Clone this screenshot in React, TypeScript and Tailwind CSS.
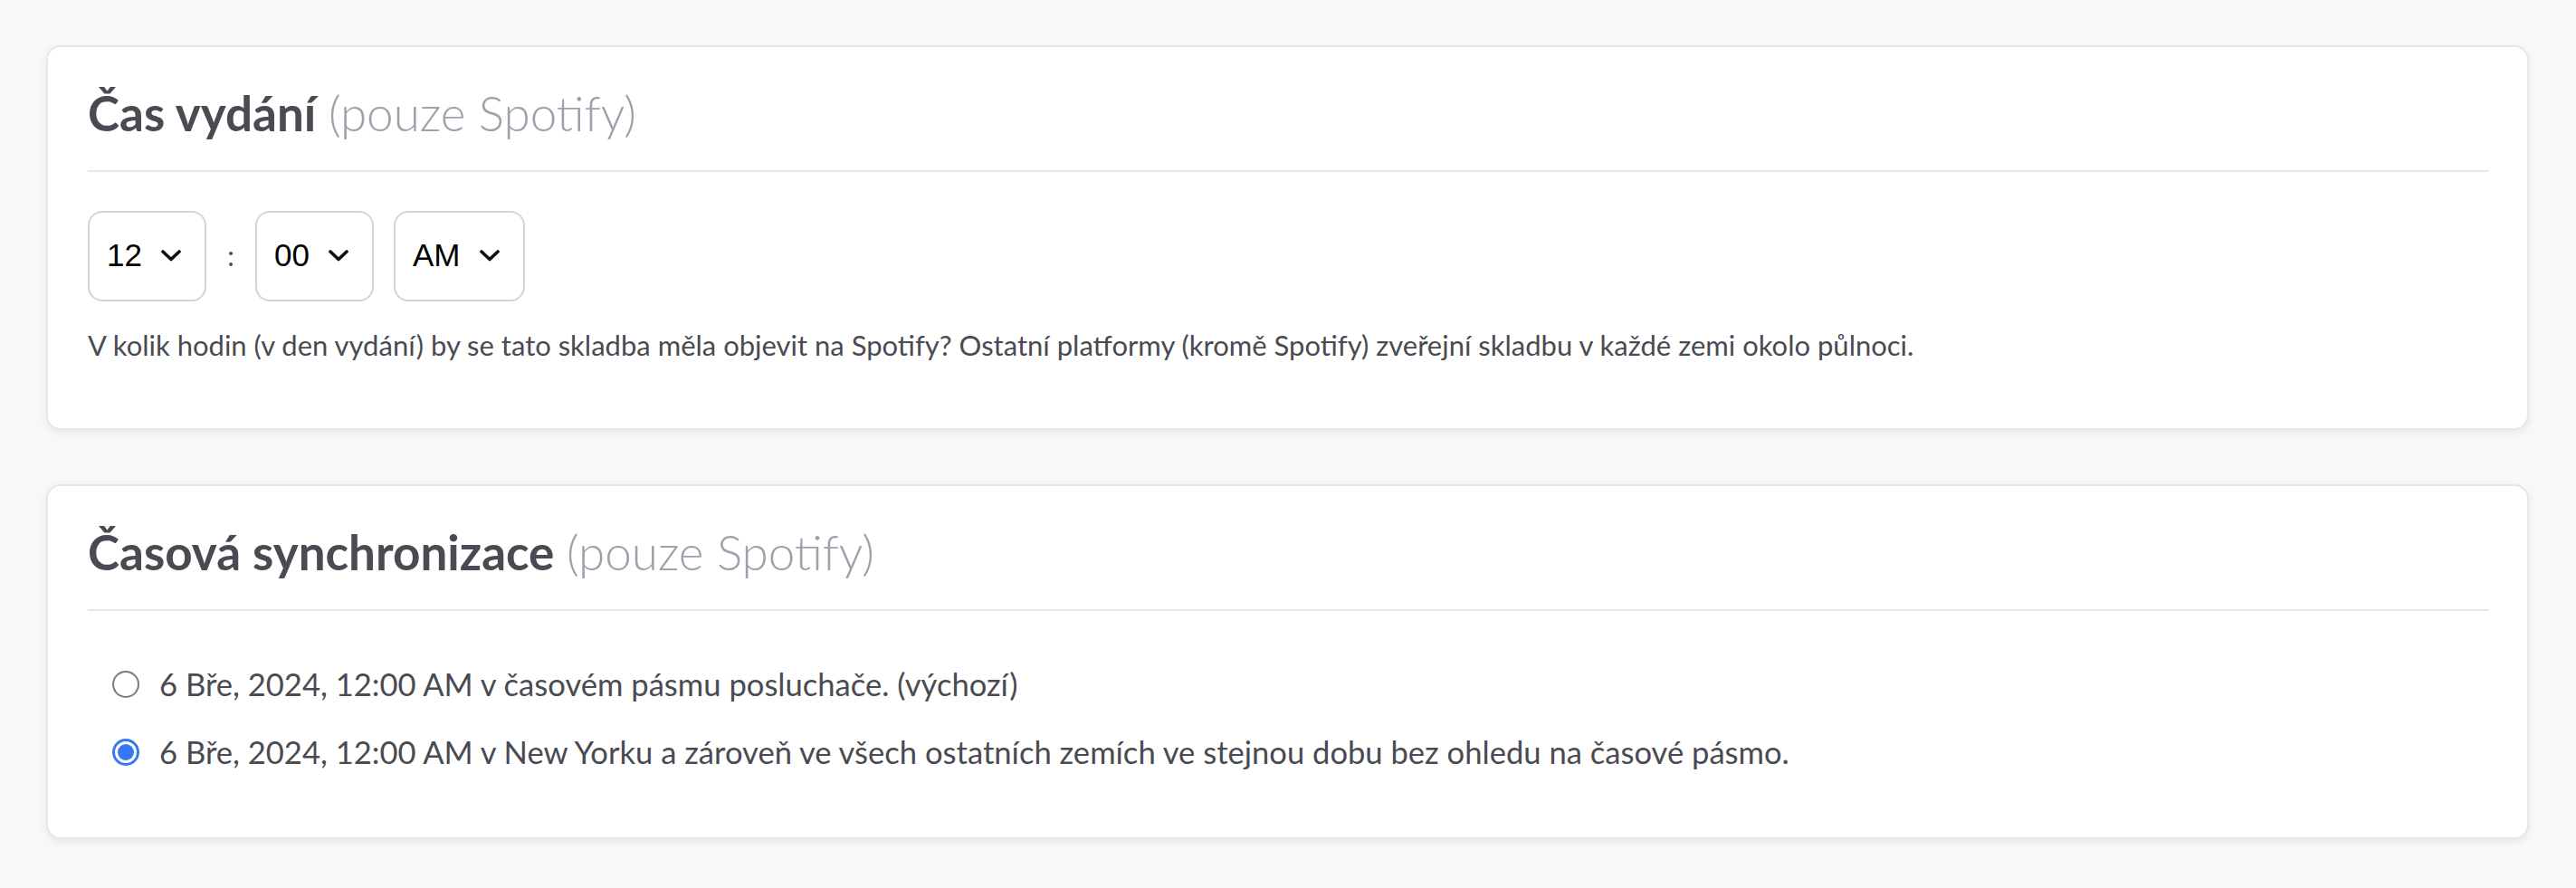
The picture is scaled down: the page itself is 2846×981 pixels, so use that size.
import React, { useState } from 'react';

const font = { fontFamily: 'Lato, "Noto Sans", sans-serif' };

const Chevron = () => (
  <svg width="22" height="13" viewBox="0 0 22 13" fill="none">
    <path d="M2 2 L11 10.5 L20 2" stroke="#111" strokeWidth="3.6" strokeLinecap="round" strokeLinejoin="round" />
  </svg>
);

const FakeSelect = ({ value, width }: { value: string; width: string }) => (
  <div
    className={`${width} h-[100px] flex items-center justify-between pl-[19px] pr-[26px] bg-white border-2 border-[#d4d4d4] rounded-[16px] text-[35px] text-black`}
    style={{ fontFamily: '"Liberation Sans", Arial, sans-serif' }}
  >
    <span>{value}</span>
    <Chevron />
  </div>
);

const Radio = ({ checked }: { checked: boolean }) =>
  checked ? (
    <span className="w-[30px] h-[30px] shrink-0 rounded-full border-[3px] border-[#3478f6] bg-white flex items-center justify-center">
      <span className="w-[18px] h-[18px] rounded-full bg-[#3478f6]" />
    </span>
  ) : (
    <span className="w-[30px] h-[30px] shrink-0 rounded-full border-2 border-[#7a7a7a] bg-white" />
  );

const CardTitle = ({ title }: { title: string }) => (
  <div className="pb-[31px] border-b-2 border-[#e6e7ea]">
    <h2 className="text-[53px] leading-[1.2] text-[#4a4a52]">
      <span className="font-bold">{title}</span>{' '}
      <span className="font-light text-[#9ca1ac]">(pouze Spotify)</span>
    </h2>
  </div>
);

export default function App() {
  const [sync, setSync] = useState<'local' | 'ny'>('ny');

  const options = [
    { id: 'local' as const, label: '6 Bře, 2024, 12:00 AM v časovém pásmu posluchače. (výchozí)' },
    {
      id: 'ny' as const,
      label: '6 Bře, 2024, 12:00 AM v New Yorku a zároveň ve všech ostatních zemích ve stejnou dobu bez ohledu na časové pásmo.',
    },
  ];

  return (
    <div className="min-h-[981px] w-full bg-[#f7f8fa] pt-[50px] pl-[51px] pr-[52px]" style={font}>
      {/* Release time */}
      <section className="bg-white border-2 border-[#e6e7ea] rounded-[16px] shadow-[0_3px_8px_rgba(0,0,0,0.07)] pt-[41px] pb-[69px] pl-[44px] pr-[42px]">
        <CardTitle title="Čas vydání" />
        <div className="flex items-center mt-[43px]">
          <FakeSelect value="12" width="w-[131px]" />
          <span className="w-[54px] text-center text-[30px] text-[#4a4a52]">:</span>
          <FakeSelect value="00" width="w-[131px]" />
          <span className="w-[22px]" />
          <FakeSelect value="AM" width="w-[145px]" />
        </div>
        <p className="mt-[25px] text-[31px] leading-[1.5] text-[#4a4a52]">
          V kolik hodin (v den vydání) by se tato skladba měla objevit na Spotify? Ostatní platformy (kromě Spotify) zveřejní skladbu v každé zemi okolo půlnoci.
        </p>
      </section>

      {/* Time sync */}
      <section className="mt-[60px] bg-white border-2 border-[#e6e7ea] rounded-[16px] shadow-[0_3px_8px_rgba(0,0,0,0.07)] pt-[41px] pb-[69px] pl-[44px] pr-[42px]">
        <CardTitle title="Časová synchronizace" />
        <div className="mt-[56px] pl-[27px] flex flex-col gap-[25px]">
          {options.map((o) => (
            <label key={o.id} className="flex items-center gap-[22px] cursor-pointer" onClick={() => setSync(o.id)}>
              <Radio checked={sync === o.id} />
              <span className="text-[34.6px] leading-[1.45] text-[#4a4a52]">{o.label}</span>
            </label>
          ))}
        </div>
      </section>
    </div>
  );
}
